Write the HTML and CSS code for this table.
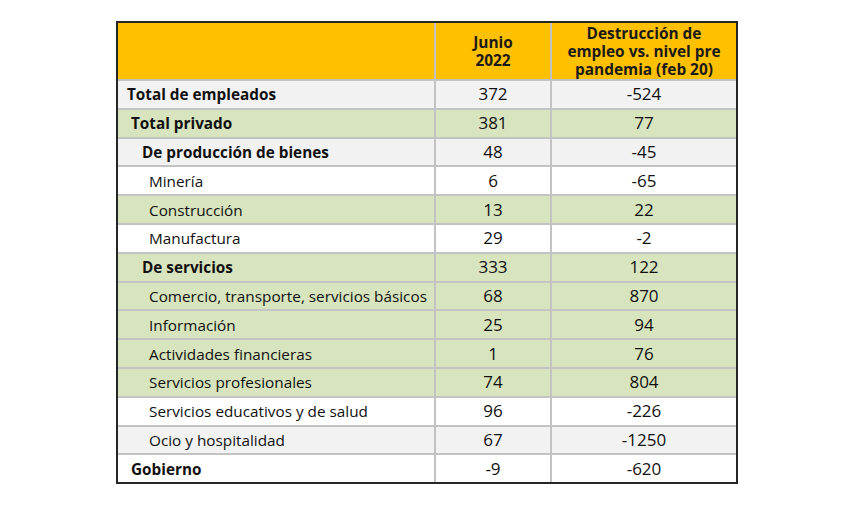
FILE: index.html
```html
<!DOCTYPE html>
<html lang="es">
<head>
<meta charset="utf-8">
<link rel="stylesheet" href="styles.css">
</head>
<body>
<table class="tbl">
  <colgroup><col class="c1"><col class="c2"><col class="c3"></colgroup>
  <thead>
    <tr class="head">
      <th></th>
      <th>Junio<br>2022</th>
      <th>Destrucción de<br>empleo vs. nivel pre<br>pandemia (feb 20)</th>
    </tr>
  </thead>
  <tbody>
    <tr class="gray"><td class="lbl b l0">Total de empleados</td><td>372</td><td>-524</td></tr>
    <tr class="green"><td class="lbl b l1">Total privado</td><td>381</td><td>77</td></tr>
    <tr class="gray"><td class="lbl b l2">De producción de bienes</td><td>48</td><td>-45</td></tr>
    <tr class="white"><td class="lbl l3">Minería</td><td>6</td><td>-65</td></tr>
    <tr class="green"><td class="lbl l3">Construcción</td><td>13</td><td>22</td></tr>
    <tr class="white"><td class="lbl l3">Manufactura</td><td>29</td><td>-2</td></tr>
    <tr class="green"><td class="lbl b l2">De servicios</td><td>333</td><td>122</td></tr>
    <tr class="green"><td class="lbl l3">Comercio, transporte, servicios básicos</td><td>68</td><td>870</td></tr>
    <tr class="green"><td class="lbl l3">Información</td><td>25</td><td>94</td></tr>
    <tr class="green"><td class="lbl l3">Actividades financieras</td><td>1</td><td>76</td></tr>
    <tr class="green"><td class="lbl l3">Servicios profesionales</td><td>74</td><td>804</td></tr>
    <tr class="white"><td class="lbl l3">Servicios educativos y de salud</td><td>96</td><td>-226</td></tr>
    <tr class="gray"><td class="lbl l3">Ocio y hospitalidad</td><td>67</td><td>-1250</td></tr>
    <tr class="white"><td class="lbl b l1">Gobierno</td><td>-9</td><td>-620</td></tr>
  </tbody>
</table>
</body>
</html>
```
FILE: styles.css
```css
html, body {
  margin: 0;
  padding: 0;
  background: #ffffff;
}
body {
  padding: 21px 0 0 116px;
  font-family: "Open Sans", "Noto Sans", sans-serif;
  color: #111111;
}
.tbl {
  border: 2px solid #262626;
  border-spacing: 0;
  border-collapse: separate;
  width: 622px;
  table-layout: fixed;
}
.c1 { width: 318px; }
.c2 { width: 116px; }
.c3 { width: 184px; }
.tbl th, .tbl td {
  padding: 0;
  border-right: 2px solid #c3c3c3;
  border-bottom: 2px solid #c3c3c3;
  text-align: center;
  vertical-align: middle;
}
.tbl th:last-child, .tbl td:last-child { border-right: none; }
.tbl tbody tr:last-child td { border-bottom: none; }
.head th {
  background: #ffc000;
  height: 54px;
  padding-top: 2px;
  font-weight: 700;
  font-size: 15.4px;
  line-height: 18px;
  color: #1a1a1a;
}
.tbl td {
  height: 26.8px;
  font-size: 17px;
  line-height: 20px;
}
.tbl td.lbl {
  text-align: left;
  font-size: 15.3px;
}
.tbl td.b { font-weight: 700; }
.tbl td.l0 { padding-left: 9px; }
.tbl td.l1 { padding-left: 13px; }
.tbl td.l2 { padding-left: 24px; }
.tbl td.l3 { padding-left: 31px; }
.gray td { background: #f2f2f2; }
.green td { background: #d7e4bd; }
.white td { background: #ffffff; }
```
